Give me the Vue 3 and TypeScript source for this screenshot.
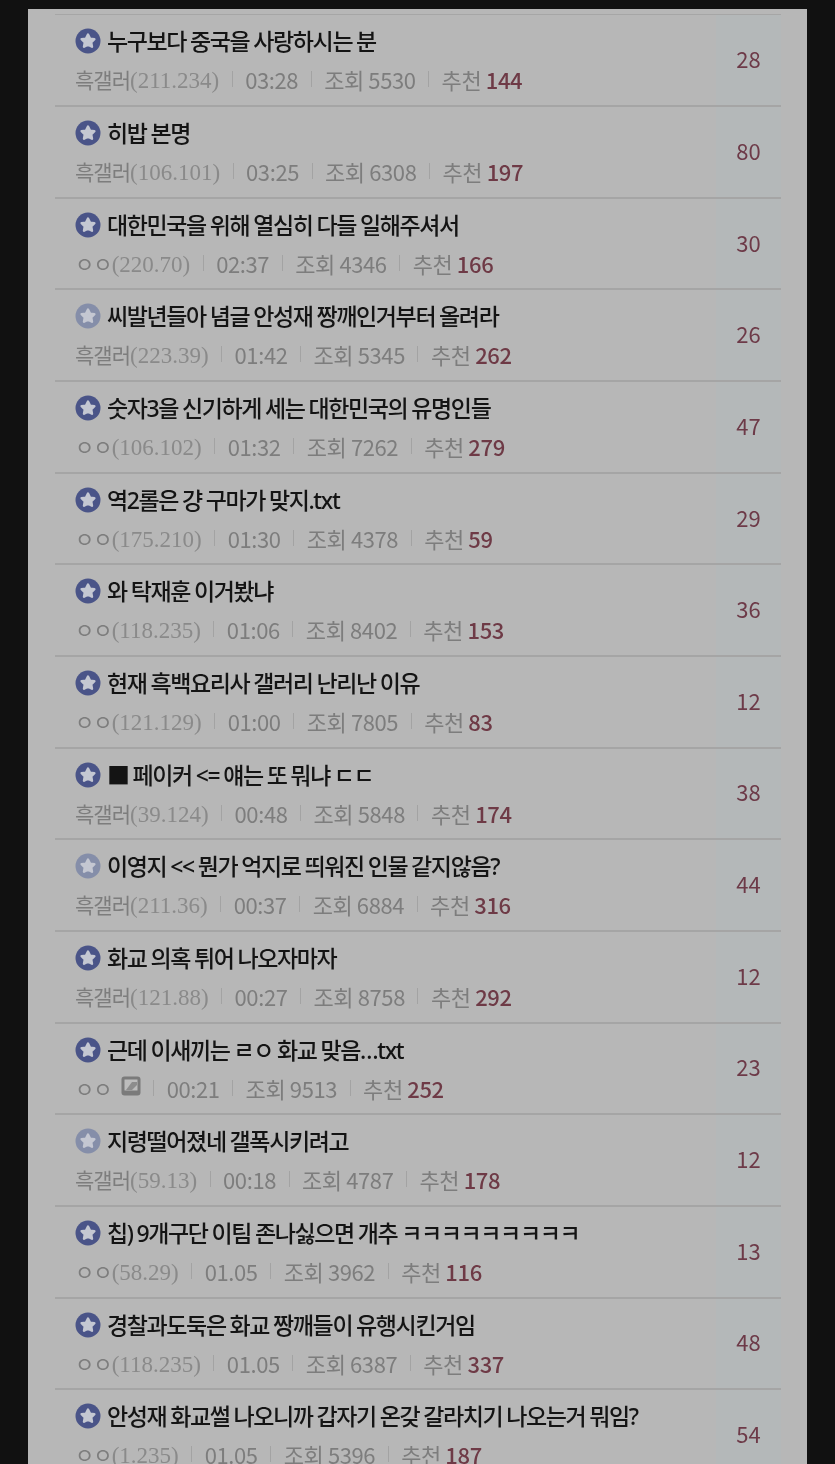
<script setup lang="ts">
interface Post {
  title: string;
  nick: string;
  ip?: string;
  time: string;
  views: number;
  likes: number;
  replies: number;
  faded?: boolean;
  hasImage?: boolean;
}

const posts: Post[] = [
  { title: '누구보다 중국을 사랑하시는 분', nick: '흑갤러', ip: '(211.234)', time: '03:28', views: 5530, likes: 144, replies: 28 },
  { title: '히밥 본명', nick: '흑갤러', ip: '(106.101)', time: '03:25', views: 6308, likes: 197, replies: 80 },
  { title: '대한민국을 위해 열심히 다들 일해주셔서', nick: 'ㅇㅇ', ip: '(220.70)', time: '02:37', views: 4346, likes: 166, replies: 30 },
  { title: '씨발년들아 념글 안성재 짱깨인거부터 올려라', nick: '흑갤러', ip: '(223.39)', time: '01:42', views: 5345, likes: 262, replies: 26, faded: true },
  { title: '숫자3을 신기하게 세는 대한민국의 유명인들', nick: 'ㅇㅇ', ip: '(106.102)', time: '01:32', views: 7262, likes: 279, replies: 47 },
  { title: '역2롤은 걍 구마가 맞지.txt', nick: 'ㅇㅇ', ip: '(175.210)', time: '01:30', views: 4378, likes: 59, replies: 29 },
  { title: '와 탁재훈 이거봤냐', nick: 'ㅇㅇ', ip: '(118.235)', time: '01:06', views: 8402, likes: 153, replies: 36 },
  { title: '현재 흑백요리사 갤러리 난리난 이유', nick: 'ㅇㅇ', ip: '(121.129)', time: '01:00', views: 7805, likes: 83, replies: 12 },
  { title: '■ 페이커 <= 얘는 또 뭐냐 ㄷㄷ', nick: '흑갤러', ip: '(39.124)', time: '00:48', views: 5848, likes: 174, replies: 38 },
  { title: '이영지 << 뭔가 억지로 띄워진 인물 같지않음?', nick: '흑갤러', ip: '(211.36)', time: '00:37', views: 6884, likes: 316, replies: 44, faded: true },
  { title: '화교 의혹 튀어 나오자마자', nick: '흑갤러', ip: '(121.88)', time: '00:27', views: 8758, likes: 292, replies: 12 },
  { title: '근데 이새끼는 ㄹㅇ 화교 맞음…txt', nick: 'ㅇㅇ', hasImage: true, time: '00:21', views: 9513, likes: 252, replies: 23 },
  { title: '지령떨어졌네 갤폭시키려고', nick: '흑갤러', ip: '(59.13)', time: '00:18', views: 4787, likes: 178, replies: 12, faded: true },
  { title: '칩) 9개구단 이팀 존나싫으면 개추 ㅋㅋㅋㅋㅋㅋㅋㅋㅋ', nick: 'ㅇㅇ', ip: '(58.29)', time: '01.05', views: 3962, likes: 116, replies: 13 },
  { title: '경찰과도둑은 화교 짱깨들이 유행시킨거임', nick: 'ㅇㅇ', ip: '(118.235)', time: '01.05', views: 6387, likes: 337, replies: 48 },
  { title: '안성재 화교썰 나오니까 갑자기 온갖 갈라치기 나오는거 뭐임?', nick: 'ㅇㅇ', ip: '(1.235)', time: '01.05', views: 5396, likes: 187, replies: 54 },
];
</script>

<template>
  <div class="page">
    <div class="panel">
      <ul class="list">
        <li v-for="post in posts" :key="post.title" class="row">
          <div class="body">
            <div class="title-line">
              <svg class="star" :class="{ faded: post.faded }" viewBox="0 0 26 26" width="26" height="26">
                <circle class="star-disc" cx="13" cy="13" r="12.5" />
                <path
                  class="star-shape"
                  d="M13 6.6l2 4 4.4.6-3.2 3.1.8 4.4-4-2.1-4 2.1.8-4.4-3.2-3.1 4.4-.6z"
                />
              </svg>
              <span class="title">{{ post.title }}</span>
            </div>
            <div class="meta">
              <span class="author">
                <span class="nick">{{ post.nick }}</span><span v-if="post.ip" class="ip">{{ post.ip }}</span>
                <svg v-if="post.hasImage" class="nick-icon" viewBox="0 0 20 20" width="20" height="20">
                  <rect x="0.5" y="0.5" width="19" height="19" rx="3" fill="#7b7b7b" />
                  <rect x="3.5" y="3.5" width="13" height="11" fill="#bdbdbd" />
                  <path d="M5 14l6-8h5v3l-5 5z" fill="#8d8d8d" />
                </svg>
              </span>
              <i class="sep" />
              <span>{{ post.time }}</span>
              <i class="sep" />
              <span>조회 {{ post.views }}</span>
              <i class="sep" />
              <span>추천 <b class="likes">{{ post.likes }}</b></span>
            </div>
          </div>
          <div class="replies">{{ post.replies }}</div>
        </li>
      </ul>
    </div>
  </div>
</template>

<style>
html,
body {
  margin: 0;
  background: #111111;
}
</style>

<style scoped>
.page {
  height: 1464px;
  overflow: hidden;
  background: #111111;
  padding: 9px 28px 0;
  box-sizing: border-box;
  font-family: "Noto Sans CJK KR", "Noto Sans", sans-serif;
}

.panel {
  height: 1500px;
  background: #b7b7b7;
  padding: 5.4px 26px 0 27px;
}

.list {
  list-style: none;
  margin: 0;
  padding: 0;
  border-top: 1px solid #a6a6a6;
  filter: blur(0.5px);
}

.row {
  display: flex;
  height: 91.67px;
  box-sizing: border-box;
  border-bottom: 2px solid #a5a5a5;
}

.body {
  flex: 1;
  min-width: 0;
  padding: 11px 0 0 20px;
}

.title-line {
  display: flex;
  align-items: center;
  gap: 6px;
  height: 30px;
}

.star {
  flex-shrink: 0;
}

.star-disc {
  fill: #4a5488;
}

.star-shape {
  fill: #c4c7d2;
  stroke: #c4c7d2;
  stroke-width: 2.4;
  stroke-linejoin: round;
}

.star.faded .star-disc {
  fill: #858ea9;
}

.title {
  font-family: "Noto Sans", "Noto Sans CJK KR", sans-serif;
  font-size: 23px;
  font-weight: 500;
  line-height: 30px;
  letter-spacing: -1.38px;
  word-spacing: -0.7px;
  color: #141414;
  white-space: nowrap;
}

.meta {
  display: flex;
  align-items: center;
  gap: 12.5px;
  height: 30px;
  margin-top: 8px;
  font-size: 22px;
  letter-spacing: -0.4px;
  color: #7d7d7d;
  white-space: nowrap;
}

.author {
  display: flex;
  align-items: baseline;
}

.nick {
  font-size: 21px;
  letter-spacing: -1px;
}

.ip {
  font-family: "Liberation Serif", serif;
  font-size: 23px;
  letter-spacing: 0;
  color: #8a8a8a;
}

.nick-icon {
  align-self: center;
  margin: -4px 0 0 9px;
}

.sep {
  width: 1px;
  height: 16px;
  background: #a3a3a3;
}

.likes {
  font-weight: 500;
  color: #6e3a46;
}

.replies {
  width: 65px;
  display: flex;
  align-items: center;
  justify-content: center;
  padding-bottom: 4px;
  box-sizing: border-box;
  background: #b4b8b9;
  font-size: 22px;
  color: #6d3a48;
}
</style>
